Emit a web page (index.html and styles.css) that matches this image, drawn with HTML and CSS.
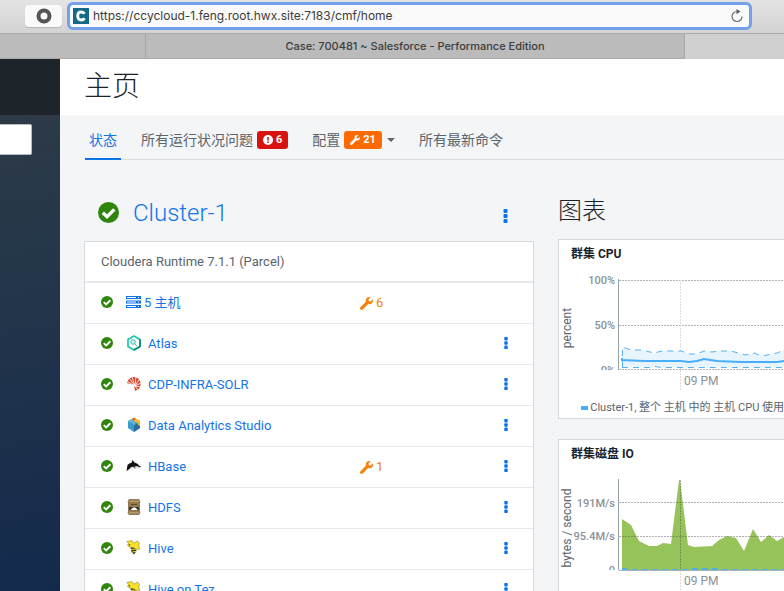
FILE: index.html
```html
<!DOCTYPE html>
<html lang="zh-CN">
<head>
<meta charset="utf-8">
<title>主页</title>
<link rel="stylesheet" href="styles.css">
</head>
<body>
<svg class="defs" aria-hidden="true">
  <symbol id="check" viewBox="0 0 20 20"><circle cx="10" cy="10" r="10" fill="#30860c"/><path d="M4.6 10.2 8.6 14l7-7" fill="none" stroke="#fff" stroke-width="3.2"/></symbol>
  <symbol id="wrench" viewBox="0 0 512 512"><path fill="currentColor" d="M507.7 109.1c-2.2-9-13.5-12.1-20.1-5.5l-74.4 74.4-67.9-11.3-11.3-67.9 74.4-74.4c6.600-6.600 3.400-17.900-5.700-20.200-47.400-11.700-99.500.9-136.600 37.900-39.600 39.600-50.500 97.100-34 147.200L18.700 402.800c-25 25-25 65.500 0 90.500s65.500 25 90.500 0l213.200-213.200c50.100 16.700 107.500 5.700 147.400-34.200 37.100-37.100 49.700-89.300 37.900-136.800z"/></symbol>
  <symbol id="dots" viewBox="0 0 4 14"><g fill="#0b73e6"><rect width="4" height="4" rx="1"/><rect y="5" width="4" height="4" rx="1"/><rect y="10" width="4" height="4" rx="1"/></g></symbol>
  <symbol id="bee" viewBox="0 0 16 16"><path fill="#f7e22b" stroke="#8d8430" stroke-width=".6" d="M1 1.500 6 .6l2 2.600L11.500 1l2 2.500-1 2.500 1.500 3-4 .5-3-2-4-.5L1.500 5l1-1.500z"/><path fill="#3c3813" d="M4.500 7.500 9 8l1.500 3L8 14.500 5.500 12z"/><path stroke="#f7e22b" d="m5 9.500 5-.5M6 12l4-.5"/><path fill="#4c461b" d="m2.500 4 2 .5-1 1.500z"/></symbol>
</svg>

<header class="browser">
  <div class="toolbar">
    <button class="tool-button" aria-label="扩展"><svg width="16" height="16" viewBox="0 0 16 16"><circle cx="8" cy="8" r="5.500" fill="none" stroke="#555" stroke-width="4"/></svg></button>
    <div class="address">
      <svg class="favicon" viewBox="0 0 16 16" aria-hidden="true"><path fill="#126a86" d="M0 0h16v16H0z"/><path d="M11.500 5.800Q10.500 4 8.300 4 4.700 4 4.700 8t3.600 4q2.200 0 3.200-1.800" fill="none" stroke="#fff" stroke-width="2.800"/></svg>
      <input class="url" aria-label="地址" value="https://ccycloud-1.feng.root.hwx.site:7183/cmf/home">
      <button class="reload" aria-label="重新加载"><svg width="14" height="14" viewBox="0 0 14 14"><path d="M7 2.500a5 5 0 1 0 5 5" fill="none" stroke="#707070" stroke-width="1.200"/><path d="m6.500 0 4 2.500-4 2.700z" fill="#606060"/></svg></button>
    </div>
  </div>
  <div class="browser-tabs"><span></span><span class="browser-tab">Case: 700481 ~ Salesforce - Performance Edition</span><span class="browser-tab-active"></span></div>
</header>

<div class="app">
  <aside class="sidebar">
    <div class="brand"></div>
    <input class="search" type="search" aria-label="搜索">
  </aside>
  <main class="content">
    <h1 class="page-title">主页</h1>
    <div class="body">
      <nav class="tabs">
        <a class="tab active" href="#">状态</a>
        <a class="tab" href="#">所有运行状况问题<span class="badge red"><svg width="10" height="10" viewBox="0 0 10 10"><circle cx="5" cy="5" r="5" fill="#fff"/><path d="M5 2v3.500M5 6.500V8" stroke="#d9130f" stroke-width="1.600"/></svg>6</span></a>
        <a class="tab" href="#">配置<span class="badge orange"><svg width="10" height="10"><use href="#wrench"/></svg>21</span><span class="caret"></span></a>
        <a class="tab" href="#">所有最新命令</a>
      </nav>
      <div class="columns">
        <section>
          <div class="cluster-head">
            <svg width="21" height="21"><use href="#check"/></svg>
            <h2><a href="#">Cluster-1</a></h2>
            <button class="menu" aria-label="群集操作"><svg width="5" height="14"><use href="#dots"/></svg></button>
          </div>
          <table class="services">
            <thead><tr><th colspan="4">Cloudera Runtime 7.1.1 (Parcel)</th></tr></thead>
            <tbody>
              <tr><td class="status"><svg width="12" height="12"><use href="#check"/></svg></td>
                <td><a class="service hosts" href="#"><svg width="15" height="12" viewBox="0 0 15 12"><path fill="#0b73e6" d="M0 0h15v3H0zM0 4.500h15v3H0zM0 9h15v3H0z"/><path stroke="#fff" d="M1 1.500h9M1 6h9M1 10.500h9M12 1.500h1M12 6h1M12 10.500h1"/></svg>5 主机</a></td>
                <td class="issues"><a href="#"><svg width="13" height="13"><use href="#wrench"/></svg>6</a></td><td></td></tr>
              <tr><td class="status"><svg width="12" height="12"><use href="#check"/></svg></td>
                <td><a class="service" href="#"><svg width="16" height="16" viewBox="0 0 16 16"><path d="m8 1 6 3.500v7L8 15l-6-3.500v-7z" fill="#fff" stroke="#20c5ad" stroke-width="1.700"/><path d="m8 15 6-3.500v-7" fill="none" stroke="#14877d" stroke-width="1.700"/><circle cx="7" cy="7" r="2.300" fill="#c9f5ed" stroke="#35bfae"/><path d="m8.700 8.700 2.300 2.300" stroke="#35bfae"/></svg>Atlas</a></td>
                <td></td><td class="action"><button class="menu" aria-label="Atlas 操作"><svg width="4" height="12"><use href="#dots"/></svg></button></td></tr>
              <tr><td class="status"><svg width="12" height="12"><use href="#check"/></svg></td>
                <td><a class="service" href="#"><svg width="16" height="16" viewBox="0 0 16 16"><path fill="#d9472f" d="M1 7Q2 2 7 1q5-.5 7 4 1.500 4-1 8L9 15 8 9Z"/><path fill="none" stroke="#fff" stroke-width=".8" d="M9 10 1 5M9 10 3 2M9 10 6 1M9 10 10 0M9 10l4.500-7M9 10l6-3M9 10l6 1M9 10l3 4"/></svg>CDP-INFRA-SOLR</a></td>
                <td></td><td class="action"><button class="menu" aria-label="CDP-INFRA-SOLR 操作"><svg width="4" height="12"><use href="#dots"/></svg></button></td></tr>
              <tr><td class="status"><svg width="12" height="12"><use href="#check"/></svg></td>
                <td><a class="service" href="#"><svg width="16" height="16" viewBox="0 0 16 16"><path fill="#3d9cc8" d="m2 4 6-3 6 3v7l-6 4-6-4z"/><path fill="#65b9dc" d="m2 4 3-1.500L9 5v9l-1 1V7z"/><path fill="#2c6da0" d="m8 8 6-2v5l-6 4z"/><path fill="#f6b82a" d="m6 2 2-1.500L14 4v5l-2-1V6L9 5z"/><path fill="#ec612c" d="m6 2 2-1.500L10 2 8 3.500z"/></svg>Data Analytics Studio</a></td>
                <td></td><td class="action"><button class="menu" aria-label="Data Analytics Studio 操作"><svg width="4" height="12"><use href="#dots"/></svg></button></td></tr>
              <tr><td class="status"><svg width="12" height="12"><use href="#check"/></svg></td>
                <td><a class="service" href="#"><svg width="16" height="16" viewBox="0 0 16 16"><path fill="#111" d="M.500 13 1.500 7Q3 5 5.500 4.800L6.500 2l2 2.500Q12 5 13.500 8l2 1-2 .3Q11 7.500 9 8.500L9.500 11 7 8.800Q4 9 3.500 11z"/><path fill="none" stroke="#bbb" stroke-width=".6" d="M4 10.500 7 9l5 1 2.500-.5"/></svg>HBase</a></td>
                <td class="issues"><a href="#"><svg width="13" height="13"><use href="#wrench"/></svg>1</a></td><td class="action"><button class="menu" aria-label="HBase 操作"><svg width="4" height="12"><use href="#dots"/></svg></button></td></tr>
              <tr><td class="status"><svg width="12" height="12"><use href="#check"/></svg></td>
                <td><a class="service" href="#"><svg width="16" height="16" viewBox="0 0 16 16"><path fill="#94794a" stroke="#75603a" stroke-width=".7" d="M3 .500h10L14 3l-.5 1v8l.5 2-1 1.500H3L2 14l.5-2V4L2 3z"/><path stroke="#c2ad7b" d="M3 2.200h10M3 13.800h10"/><path stroke="#5b4a2b" d="M5 5.500h6"/><path fill="#3c3425" d="M3 8h10v3H3z"/><path fill="#fff" d="m4.500 11 2-2 1.500-.8L10 9l1.500 2z"/></svg>HDFS</a></td>
                <td></td><td class="action"><button class="menu" aria-label="HDFS 操作"><svg width="4" height="12"><use href="#dots"/></svg></button></td></tr>
              <tr><td class="status"><svg width="12" height="12"><use href="#check"/></svg></td>
                <td><a class="service" href="#"><svg width="16" height="16"><use href="#bee"/></svg>Hive</a></td>
                <td></td><td class="action"><button class="menu" aria-label="Hive 操作"><svg width="4" height="12"><use href="#dots"/></svg></button></td></tr>
              <tr><td class="status"><svg width="12" height="12"><use href="#check"/></svg></td>
                <td><a class="service" href="#"><svg width="16" height="16"><use href="#bee"/></svg>Hive on Tez</a></td>
                <td></td><td class="action"><button class="menu" aria-label="Hive on Tez 操作"><svg width="4" height="12"><use href="#dots"/></svg></button></td></tr>
            </tbody>
          </table>
        </section>
        <section>
          <h2 class="charts-title">图表</h2>
          <article class="chart">
            <h3>群集 CPU</h3>
            <svg width="225" height="118" viewBox="0 0 225 118">
              <clipPath id="plot"><path d="M0 0h225v98H0z"/></clipPath>
              <path class="grid" d="M60 8.500h165M60 53.500h165M60 97.500h165"/>
              <path class="grid faint" d="M121.500 8v110"/>
              <path class="axis" d="M59.500 7v91"/>
              <path fill="#e9f5fe" d="M63 75 72 78H83L95 81 103 79H122L130 82H138L145 79 153 80 161 79H172L186 83 195 81 203 84 218 81 225 78V95H63z"/>
              <path class="range" d="M63.500 95V75L72 78H83L95 81 103 79H122L130 82H138L145 79 153 80 161 79H172L186 83 195 81 203 84 218 81 225 78"/>
              <path class="range" d="M63 95.500h27l6-1 6 1h123"/>
              <path class="mean" d="M63 86v2L85 89H122L130 90 138 89 145 87 158 89 182 90H218L225 89"/>
              <g class="ticks" clip-path="url(#plot)"><text x="56" y="12">100%</text><text x="56" y="57">50%</text><text x="56" y="102">0%</text></g>
              <text class="time" x="125" y="113">09 PM</text>
              <text class="unit" transform="translate(12 56) rotate(-90)">percent</text>
            </svg>
            <p class="legend"><span class="swatch"></span>Cluster-1, 整个 主机 中的 主机 CPU 使用</p>
          </article>
          <article class="chart">
            <h3>群集磁盘 IO</h3>
            <svg width="225" height="118" viewBox="0 0 225 118">
              <path fill="#97c45a" d="M63 98V47L72 53 80 69 90 74H98L104 71 112 72 120 8H121L129 73 135 75 153 74 160 68 168 64 177 66 185 79 194 57 202 70 210 63 218 69 225 65V98z"/>
              <path class="grid over" d="M60 30.500h165M60 64.500h165"/>
              <path class="grid over" d="M121.500 8v90"/>
              <path class="grid faint" d="M121.500 98v20"/>
              <path class="axis" d="M59.500 7v91"/>
              <path stroke="#aab3ba" d="M60 98.500h165"/>
              <path stroke="#4bb1e6" stroke-dasharray="6 4" d="M63 97.500h162"/>
              <path stroke="#4bb1e6" d="M63 96.500h5M133 96.500h6M143 96.500h6M153 96.500h6"/>
              <g class="ticks" clip-path="url(#plot)"><text x="56" y="35">191M/s</text><text x="56" y="68">95.4M/s</text><text x="56" y="102">0</text></g>
              <text class="time" x="125" y="113">09 PM</text>
              <text class="unit" transform="translate(12 56) rotate(-90)">bytes / second</text>
            </svg>
          </article>
        </section>
      </div>
    </div>
  </main>
</div>
</body>
</html>
```

FILE: styles.css
```css
* { box-sizing: border-box; }
body {
  margin: 0;
  height: 100vh;
  display: flex;
  flex-direction: column;
  overflow: hidden;
  font: 13px/20px Roboto, "Noto Sans CJK SC", sans-serif;
  color: #5a656d;
  background: #f3f5f7;
}
h1, h2, h3, p { margin: 0; }
a { color: #1474e8; text-decoration: none; }
button { border: 0; padding: 0; background: none; }
svg { display: block; flex: none; }
.defs { position: absolute; width: 0; height: 0; }

.browser { flex: none; font-family: Inter, sans-serif; color: #3c3c3c; }
.toolbar {
  display: flex;
  align-items: center;
  gap: 5px;
  height: 33px;
  padding: 1px 32px 2px 25px;
  background: linear-gradient(#e4e4e4, #d3d3d3);
}
.tool-button {
  display: flex;
  align-items: center;
  justify-content: center;
  width: 37px;
  height: 22px;
  border-radius: 4px;
  background: #fafafa;
  box-shadow: 0 1px 1px #b5b5b5;
}
.address {
  flex: 1;
  display: flex;
  align-items: center;
  gap: 4px;
  height: 28px;
  padding: 0 5px 0 3px;
  border: 3px solid #73a0e8;
  border-radius: 6px;
  background: #fafafa;
}
.favicon { width: 16px; height: 16px; }
.url {
  flex: 1;
  min-width: 0;
  padding: 0;
  border: 0;
  outline: 0;
  background: none;
  font: 12px/20px Inter, sans-serif;
  color: #3c3c3c;
}
.browser-tabs {
  display: grid;
  grid-template-columns: 145px 1fr 99px;
  height: 26px;
  border-top: 1px solid #acacac;
  border-bottom: 1px solid #a8a8a8;
  background: #bbb;
  font-size: 11px;
  font-weight: 500;
  line-height: 25px;
  text-align: center;
}
.browser-tab { border: solid #a5a5a5; border-width: 0 1px; white-space: nowrap; }
.browser-tab-active { background: #d0d0d0; }

.app { flex: 1; min-height: 0; display: flex; }
.sidebar {
  flex: none;
  width: 60px;
  background: linear-gradient(170deg, #2e3a46 10%, #25374a 35%, #142a4c);
}
.brand { height: 56px; background: #1d252b; }
.search {
  display: block;
  width: 32px;
  height: 31px;
  margin-top: 9px;
  border: 1px solid #b5bbc1;
  border-left: 0;
  border-radius: 0 2px 2px 0;
  background: #fff;
}
.content { flex: 1; min-width: 0; overflow: hidden; }
.page-title {
  height: 56px;
  padding-left: 24px;
  background: #fff;
  color: #1b2329;
  font-size: 28px;
  font-weight: 300;
  line-height: 56px;
}
.body { padding-left: 24px; }
.tabs {
  display: flex;
  gap: 16px;
  height: 45px;
  margin-left: 1px;
  border-bottom: 1px solid #d9dcdf;
  font-size: 14px;
}
.tab {
  display: flex;
  align-items: center;
  height: 45px;
  padding: 6px 4px 0;
  border-bottom: 2px solid transparent;
  color: #5a656d;
  white-space: nowrap;
}
.tab.active { color: #1474e8; border-color: #0b73e6; }
.badge {
  display: flex;
  align-items: center;
  gap: 3px;
  height: 18px;
  margin-left: 4px;
  padding: 0 6px;
  border-radius: 3px;
  color: #fff;
  font-size: 11px;
  font-weight: 700;
}
.red { background: #d9130f; }
.orange { background: #fc6a03; }
.caret {
  margin-left: 5px;
  border: 4px solid transparent;
  border-top-color: #5a656d;
  border-bottom: 0;
}
.columns {
  display: grid;
  grid-template-columns: 450px minmax(0, 1fr);
  gap: 24px;
}
.cluster-head {
  display: flex;
  align-items: center;
  gap: 14px;
  height: 81px;
  padding: 24px 26px 0 14px;
}
.cluster-head h2 { flex: 1; font-size: 24px; font-weight: 300; line-height: 32px; }
.cluster-head .menu { padding-top: 6px; }

.services {
  width: 100%;
  border: 1px solid #d6dade;
  border-spacing: 0;
  background: #fff;
}
.services th {
  height: 41px;
  padding: 0 16px;
  border-bottom: 2px solid #e6e8ea;
  font-weight: 400;
  text-align: left;
}
.services td { height: 41px; padding: 0; border-bottom: 1px solid #e6e8eb; }
.services .status { width: 41px; padding: 0 0 2px 16px; }
.service, .issues a { display: flex; align-items: center; gap: 6px; }
.service svg { margin-bottom: 3px; }
.hosts { gap: 3px; }
.issues a { gap: 3px; color: #f5810e; }
.services .issues { width: 144px; }
.services .action { width: 29px; padding-top: 2px; }

.charts-title {
  height: 79px;
  padding-top: 35px;
  color: #1b2329;
  font-size: 24px;
  font-weight: 300;
  line-height: 32px;
}
.chart {
  height: 180px;
  margin-bottom: 20px;
  border: 1px solid #d6dade;
  border-right: 0;
  background: #fff;
  overflow: hidden;
}
.chart h3 {
  height: 32px;
  padding-left: 12px;
  color: #1b2329;
  font-size: 12px;
  font-weight: 700;
  line-height: 28px;
}
.chart text { font-size: 12px; fill: #8b9198; }
.chart .ticks text { font-size: 11px; font-weight: 500; text-anchor: end; }
.chart .unit { text-anchor: middle; fill: #5a656d; }
.grid { stroke: #b4b4b4; stroke-dasharray: 2 1; }
.over { stroke: #55555577; }
.faint { stroke: #dcdcdc; }
.axis { stroke: #96a0a8; }
.range { fill: none; stroke: #55b2f5; stroke-dasharray: 6 5; }
.mean { fill: none; stroke: #47aefa; stroke-width: 2; }
.legend {
  display: flex;
  align-items: center;
  gap: 2px;
  height: 28px;
  padding: 8px 0 0 22px;
  font-size: 11px;
  white-space: nowrap;
}
.swatch { width: 8px; height: 4px; background: #47aefa; }
```
